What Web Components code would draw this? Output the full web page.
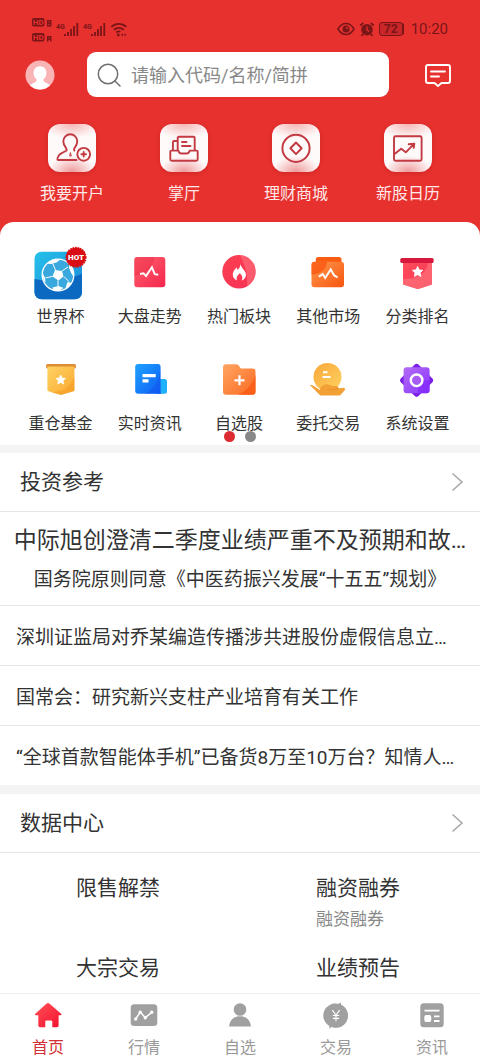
<!DOCTYPE html>
<html lang="zh-CN">
<head>
<meta charset="utf-8">
<meta name="viewport" content="width=device-width, initial-scale=1">
<title>首页</title>
<style>
  body {
    margin: 0;
    font-family: Roboto, "Noto Sans CJK SC", sans-serif;
    color: #333;
    background-color: #fff;
  }
</style>
</head>
<body>
<home-page>
  <status-bar></status-bar>
  <search-header placeholder="请输入代码/名称/简拼"></search-header>
  <quick-nav>
    <quick-link icon="account">我要开户</quick-link>
    <quick-link icon="hall">掌厅</quick-link>
    <quick-link icon="coin">理财商城</quick-link>
    <quick-link icon="calendar">新股日历</quick-link>
  </quick-nav>
  <feature-panel>
    <feature-link icon="worldcup">世界杯</feature-link>
    <feature-link icon="trend">大盘走势</feature-link>
    <feature-link icon="hot">热门板块</feature-link>
    <feature-link icon="market">其他市场</feature-link>
    <feature-link icon="rank">分类排名</feature-link>
    <feature-link icon="fund">重仓基金</feature-link>
    <feature-link icon="info">实时资讯</feature-link>
    <feature-link icon="folder">自选股</feature-link>
    <feature-link icon="entrust">委托交易</feature-link>
    <feature-link icon="setting">系统设置</feature-link>
  </feature-panel>
  <section-card heading="投资参考">
    <news-lead>
      <span slot="title">中际旭创澄清二季度业绩严重不及预期和故…</span>
      <span slot="sub">国务院原则同意《中医药振兴发展“十五五”规划》</span>
    </news-lead>
    <news-item>深圳证监局对乔某编造传播涉共进股份虚假信息立…</news-item>
    <news-item>国常会：研究新兴支柱产业培育有关工作</news-item>
    <news-item>“全球首款智能体手机”已备货8万至10万台？知情人…</news-item>
  </section-card>
  <section-card heading="数据中心">
    <data-grid>
      <data-item>限售解禁</data-item>
      <data-item sub="融资融券">融资融券</data-item>
      <data-item>大宗交易</data-item>
      <data-item>业绩预告</data-item>
    </data-grid>
  </section-card>
  <tab-bar slot="footer">
    <tab-item icon="tab-home" active>首页</tab-item>
    <tab-item icon="tab-quote">行情</tab-item>
    <tab-item icon="tab-self">自选</tab-item>
    <tab-item icon="tab-trade">交易</tab-item>
    <tab-item icon="tab-news">资讯</tab-item>
  </tab-bar>
</home-page>

<script>
const star = (x, y, s) =>
  `<path transform="translate(${x} ${y}) scale(${s})" d="M0-1 .29-.38 .95-.31 .46.15 .59.81 0 .48-.59.81-.46.15-.95-.31-.29-.38Z" fill="#fff" stroke="#fff" stroke-width=".15" stroke-linejoin="round"/>`;

const gradient = (id, from, to) =>
  `<linearGradient id="${id}" x1="0" y1="0" x2="1" y2="1"><stop offset="0" stop-color="${from}"/><stop offset="1" stop-color="${to}"/></linearGradient>`;

// each entry: [width, height, svg content]
const icons = {
  // header
  avatar: [30, 30, `
    <clipPath id="c"><circle cx="15" cy="15" r="14.5"/></clipPath>
    <circle cx="15" cy="15" r="14.5" fill="#f9b4b6"/>
    <path clip-path="url(#c)" fill="#fff" d="M15 6.3c-4 0-6.4 2.8-6.4 6.6 0 2.8 1.3 5 3 6.4.3 2-.8 2.7-3 3.7C6.3 24 5.4 25 5 26v4h20v-4c-.4-1-1.3-2-3.6-3-2.2-1-3.3-1.7-3-3.7 1.7-1.4 3-3.6 3-6.4 0-3.8-2.4-6.6-6.4-6.6Z"/>`],
  search: [24, 24, `
    <g fill="none" stroke="#707070" stroke-width="1.5" stroke-linecap="round"><circle cx="11" cy="11" r="9.7"/><path d="m18 18 5 5"/></g>`],
  message: [28, 24, `
    <g fill="none" stroke="#fff" stroke-width="1.9" stroke-linecap="round" stroke-linejoin="round">
      <path d="M4 2h20a2 2 0 0 1 2 2v14a2 2 0 0 1-2 2h-6.5L14 23l-3.500-3H4a2 2 0 0 1-2-2V4a2 2 0 0 1 2-2Z"/>
      <path d="M7 8.500h14M7 13.500h8"/>
    </g>`],

  // quick links
  account: [48, 48, `
    <g fill="none" stroke="#c23a42" stroke-width="1.9" stroke-linecap="round" stroke-linejoin="round">
      <path d="M28.5 36h-18c-1 0-1.3-.8-1-1.8.6-3.6 4-5.2 8.3-7.2 1-.6 1-1.6.4-2.6-1.7-2.3-2.9-4.3-2.9-7.1a7 7 0 0 1 14 0c0 2.8-1.2 4.8-2.9 7.1-.6.9-.5 1.6 0 2.2"/>
      <circle cx="35.7" cy="30.3" r="6.4"/>
      <path d="M35.7 28v4.600M33.4 30.300H38"/>
      <path d="m22.3 29-.6 3h1.200Z" stroke-width="1"/>
    </g>`],
  hall: [48, 48, `
    <g fill="none" stroke="#c23a42" stroke-width="1.9" stroke-linecap="round" stroke-linejoin="round">
      <path d="M17.7 26V14a1.200 1.200 0 0 1 1.200-1.200h14.600a1.200 1.200 0 0 1 1.200 1.200v12M17.700 17h-3.500a1.300 1.300 0 0 0-1.300 1.300V26"/>
      <path d="M11.3 26.600h7c.5 2 1.400 2.900 3 2.900h5.400c1.600 0 2.500-.9 3-2.900h7a1 1 0 0 1 1 1v7.700a1.500 1.500 0 0 1-1.500 1.500H11.800a1.500 1.500 0 0 1-1.500-1.500v-7.700a1 1 0 0 1 1-1Z"/>
      <path d="M22 18h4.500M22 22h8.500"/>
    </g>`],
  coin: [48, 48, `
    <g fill="none" stroke="#c23a42" stroke-width="2" stroke-linejoin="round">
      <circle cx="24" cy="24.3" r="13.6"/>
      <path d="m24 18.500 5.600 5.800-5.600 5.800-5.600-5.800Z"/>
    </g>`],
  calendar: [48, 48, `
    <g fill="none" stroke="#c23a42" stroke-width="1.9" stroke-linecap="round" stroke-linejoin="round">
      <rect x="10" y="12.300" width="27.600" height="24.500" rx="1.500"/>
      <path d="m10.500 30 6.700-5.300 4.600 3.600 7.700-8M24.700 20.300l5.600-.5-.6 4"/>
    </g>`],

  // feature grid
  worldcup: [56, 56, `
    <defs>${gradient("g", "#25c1ea", "#1b86d8")}</defs>
    <rect x="1.5" y="7.7" width="47.5" height="47.6" rx="7" fill="url(#g)"/>
    <path d="M1.5 35c15 3 34 0 47.500-5v18.300a7 7 0 0 1-7 7H8.500a7 7 0 0 1-7-7Z" fill="#0c69c2"/>
    <circle cx="25" cy="31" r="15.800" fill="#39a8de" stroke="#fff" stroke-width="1.300"/>
    <g fill="#fff">
      <path d="m22 26 7 1 1.500 5.500-5 4-6-4Z"/>
      <path d="M14 19.500 20.500 15l6.500.8-3.500 2.700-6 1.500ZM37 20l3.500 8-.6 4-2-3.500-2-5ZM9.500 29l2.500 4.500.5 5-2-2.500ZM20 46.500l-.5-3 6-1.500 5 2-4.500 3ZM34.500 38l4 1-3.500 4.500-2.500.5Z"/>
    </g>
    <path d="m22.500 26-3-7M29 27l6-4M31 32.600l5 5M25 36.400v6M19.500 32.400l-7 1.500" stroke="#fff" stroke-width="1"/>
    <circle cx="43" cy="13.300" r="9.800" fill="#d80c12" stroke="#d80c12" stroke-width="1.500" stroke-dasharray="1.500 1"/>
    <text x="43" y="16.300" text-anchor="middle" font-family="Roboto, sans-serif" font-weight="900" font-size="8" fill="#fff">HOT</text>`],
  trend: [56, 56, `
    <defs>${gradient("g", "#ff6470", "#f4254c")}</defs>
    <rect x="12.3" y="13" width="31" height="30.3" rx="3" fill="url(#g)"/>
    <path d="M15.3 13h17c-1 11-8 17-20 19V16a3 3 0 0 1 3-3Z" fill="#e9203f" opacity=".35"/>
    <path d="m18 30 3.400-.7 2.700 2.700 5.800-8.700 2.900 6.900 3.500.6" fill="none" stroke="#fff" stroke-width="1.900"/>`],
  hot: [56, 56, `
    <defs>${gradient("g", "#fb4152", "#f82f55")}</defs>
    <circle cx="28" cy="27.700" r="16.700" fill="url(#g)"/>
    <path d="M29 11.100A16.700 16.700 0 0 1 36 42.300C37 29 33 19 29 11.100Z" fill="#ff8a8f" opacity=".45"/>
    <path d="M28.500 18.500c1.500 3.500.3 5-1.700 7.300-.8-.8-1-1.500-1-2.500-2.800 2.700-4 5-4 7.300 0 3 1.700 5 4.300 6-1.300-3 .2-5 2.800-7.300 2.300 2.300 3.200 4.500 1.800 7.300 3-1.300 4.500-3.500 4.200-6.400-.2-3.200-4.600-6-6.400-11.700Z" fill="#fff"/>`],
  market: [56, 56, `
    <defs>${gradient("g", "#ff9a4e", "#f8540f")}</defs>
    <rect x="15.800" y="13" width="25.700" height="10" rx="2.500" fill="#f95d12"/>
    <rect x="11.500" y="17.700" width="32.500" height="25.600" rx="3" fill="url(#g)"/>
    <path d="M14.500 17.700H27c0 7-6 12-15.500 13V20.700a3 3 0 0 1 3-3Z" fill="#f9500d" opacity=".7"/>
    <path d="m18.800 32.700 4-2.600 2.400 3.900 5.500-8.500 3.500 6 3.400 1.800" fill="none" stroke="#fff" stroke-width="2"/>`],
  rank: [56, 56, `
    <defs>${gradient("g", "#ff4e5b", "#f73353")}</defs>
    <path d="M14 17h29v23.500L30 44.700q-1.200.4-2.400 0L14 40.500Z" fill="url(#g)"/>
    <path d="M43 19v21.500L30 44.700q-1.200.4-2.400 0L14 40.500V35c13 0 23-4 25-16Z" fill="#ff7d81" opacity=".6"/>
    <rect x="11.300" y="14" width="33.300" height="5" rx="1.500" fill="#d7173b"/>
    ${star(28.6, 28, 5.5)}`],
  fund: [56, 56, `
    <defs>${gradient("g", "#ffd263", "#f9a92f")}</defs>
    <rect x="13" y="13" width="30" height="4.500" rx="1.500" fill="#dd8e36"/>
    <path d="M14.400 15.500h27V39q0 1-1 1.300l-11 3.200q-1.500.4-3 0l-11-3.200q-1-.3-1-1.300Z" fill="url(#g)"/>
    <path d="M41.400 26V39q0 1-1 1.300l-11 3.200q-1.500.4-3 0l-8-2.300c13-1 18-5 23-15.200Z" fill="#f79d27" opacity=".6"/>
    ${star(27.7, 29, 5)}`],
  info: [56, 56, `
    <defs>${gradient("g", "#1fa2ff", "#0c5df5")}</defs>
    <rect x="33" y="28" width="12" height="14.700" rx="2.500" fill="#1eb0fb"/>
    <path d="M16.200 13H36a2.500 2.500 0 0 1 2.500 2.500v24.700a2.500 2.500 0 0 0 1 2.500H16.200a3 3 0 0 1-3-3V16a3 3 0 0 1 3-3Z" fill="url(#g)"/>
    <path d="M38.500 15v27.700H23c10-5 15-14 15.500-27.700Z" fill="#1455ee" opacity=".5"/>
    <path d="M20.500 24.600h13.200M20.500 29.800h6" stroke="#fff" stroke-width="3.200"/>`],
  folder: [56, 56, `
    <defs>${gradient("g", "#ffa562", "#fb6a22")}</defs>
    <path d="M15 13.300h10.500q1.200 0 2 1l2.300 3.200H41.500a3 3 0 0 1 3 3v20.200a3 3 0 0 1-3 3H15a3 3 0 0 1-3-3V16.300a3 3 0 0 1 3-3Z" fill="url(#g)"/>
    <path d="M44.500 24v16.700a3 3 0 0 1-3 3H27C36 40 42 33 44.500 24Z" fill="#fb5a14" opacity=".8"/>
    <path d="M28.500 24.300v10M23.500 29.300h10" stroke="#fff" stroke-width="2.200"/>`],
  entrust: [56, 56, `
    <defs>${gradient("g", "#f9a73a", "#ffd361")}</defs>
    <circle cx="27.500" cy="26" r="14" fill="url(#g)"/>
    <path d="M9.800 34q2.200-.5 4 1l6 4c.5-3.500 3.500-5.700 7-5.700 2 0 3.500 1 5.500 1.800h4.500q1.800.5 1.700 2.200l5.200-.6q2 .4 1 2.600L40.500 44q-.7.500-1.500.5H21.500q-1 0-1.700-.6Z" fill="#f3a136"/>
    <path d="M27 38.500c4.500.7 8 .5 11.300-1.300" fill="none" stroke="#e9912a" stroke-width="1"/>
    <path d="M23 21.300h4.500M22.500 26h8" stroke="#fff" stroke-width="2"/>`],
  setting: [56, 56, `
    <defs>${gradient("g", "#b26bf5", "#8a35fb")}</defs>
    <rect x="-12.500" y="-12.500" width="25" height="25" rx="3" transform="translate(27.600 29.300) rotate(45)" fill="#7a1fe6"/>
    <rect x="14.600" y="16.300" width="26" height="26" rx="3" fill="url(#g)"/>
    <path d="M40.600 29.300v10a3 3 0 0 1-3 3H29C29 36 30 33 27.600 29.300Z" fill="#8126ff" opacity=".6"/>
    <circle cx="27.600" cy="29.300" r="5.800" fill="#a75cf3" stroke="#fff" stroke-width="2.400"/>`],

  // tab bar
  "tab-home": [28, 28, `
    <defs>${gradient("g", "#ff5156", "#f5102f")}</defs>
    <path d="M12.700 2.500q1.300-1 2.600 0l11.800 10.200q1 1.200-.5 1.600h-2v10.300q0 1.700-1.700 1.700h-4.600v-5.500q0-1.300-1.300-1.300h-4.500q-1.200 0-1.200 1.300v5.500H6q-1.700 0-1.700-1.700V14.300H1.800q-1.500-.4-.5-1.600Z" fill="url(#g)"/>`],
  "tab-quote": [28, 28, `
    <rect x=".7" y="3.300" width="26.600" height="21.700" rx="3.500" fill="#a0a0a0"/>
    <path d="m5.700 18 4.600-7 5 5.700 6.300-5.200" fill="none" stroke="#fff" stroke-width="1.500"/>
    <g fill="#fff"><circle cx="5.700" cy="18" r="1.700"/><circle cx="10.300" cy="11.200" r="1.700"/><circle cx="15.300" cy="16.700" r="1.700"/><circle cx="21.700" cy="11.300" r="1.700"/></g>`],
  "tab-self": [28, 28, `
    <g fill="#a0a0a0"><circle cx="14" cy="8.500" r="6.300"/><path d="M3 25.500c.8-6.500 4.500-10.300 11-10.300s10.200 3.800 11 10.300Z"/></g>`],
  "tab-trade": [28, 28, `
    <path d="M19 1.500v2.300A12 12 0 0 1 9.500 25.800L7.300 28v-3A12 12 0 0 1 16 2.900Z" fill="#a0a0a0"/>
    <circle cx="14" cy="14.700" r="12" fill="#a0a0a0"/>
    <path d="m10.300 9 3.700 5.300L17.700 9M14 14.300v6M10.800 14.500h6.400M10.800 17.400h6.400" fill="none" stroke="#fff" stroke-width="1.200"/>`],
  "tab-news": [28, 28, `
    <rect x="2.300" y="2.300" width="23.400" height="24" rx="3.500" fill="#a0a0a0"/>
    <path d="M6.500 9.700h15M16 15.300h5.500M16 20h5.500" stroke="#fff" stroke-width="1.800"/>
    <rect x="6.300" y="14" width="7" height="7" rx="2" fill="#fff"/>`],

  // status bar
  hd: [22, 26, `
    <g fill="#7a1518"><rect x="1" y="2" width="12.500" height="8.500" rx="2"/><rect x="1" y="17" width="12.500" height="8.500" rx="2"/></g>
    <g font-family="Roboto, sans-serif" font-weight="700" font-size="8" fill="#e7312f" text-anchor="middle"><text x="7.300" y="9.200">HD</text><text x="7.300" y="24.200">HD</text></g>
    <g fill="none" stroke="#7a1518" stroke-width="1.500"><path d="M16.700 4.700h3v5h-3ZM16.700 7.200h3M16.700 25.500v-4.800h3v4.800M16.700 23h3"/></g>`],
  signal: [24, 18, `
    <text x="0" y="8.500" font-family="Roboto, sans-serif" font-weight="700" font-size="7" fill="#7a1518">4G</text>
    <path d="M9 16v-2M12 16v-4M15 16V9M18 16V6M21.300 16V3" stroke="#7a1518" stroke-width="1.800"/>`],
  wifi: [18, 16, `
    <g fill="none" stroke="#7a1518" stroke-width="1.800"><path d="M1.300 5.800a11 11 0 0 1 15 0M3.800 8.800a7.500 7.500 0 0 1 10 0M6.300 11.500a4 4 0 0 1 4-.8"/></g>
    <circle cx="8.300" cy="14" r="1.400" fill="#7a1518"/>
    <path d="m11 13.700 2-1.500v3ZM16.500 13.700l-2-1.500v3Z" fill="#7a1518"/>`],
  eye: [18, 14, `
    <path d="M1 7c4.300-7.300 11.700-7.300 16 0-4.300 7.300-11.700 7.300-16 0Z" fill="none" stroke="#7a1518" stroke-width="1.500"/>
    <circle cx="9" cy="7" r="3.500" fill="#7a1518"/><circle cx="10" cy="6" r="1" fill="#e7312f"/>`],
  alarm: [16, 16, `
    <circle cx="8" cy="8.700" r="5.800" fill="#7a1518"/>
    <path d="M1.300 4.500 4.300 1.800M14.700 4.500l-3-2.700M4 13l-1.500 2M12 13l1.500 2" stroke="#7a1518" stroke-width="1.700"/>
    <path d="M8 5.500V9l2.300 1.500" fill="none" stroke="#e7312f" stroke-width="1.300"/>`],
};

const render = (element, html) => {
  const template = document.createElement("template");
  template.innerHTML = html;
  element.attachShadow({ mode: "open" }).appendChild(template.content.cloneNode(true));
};

customElements.define(
  "app-icon",
  class AppIcon extends HTMLElement {
    constructor() {
      super();
      this.attachShadow({ mode: "open" });
    }

    connectedCallback() {
      const [width, height, content] = icons[this.getAttribute("name")];
      this.shadowRoot.innerHTML = `
        <style>
          :host { display: block; flex: none; }
          svg { display: block; }
        </style>
        <svg width="${width}" height="${height}" viewBox="0 0 ${width} ${height}" aria-hidden="true">${content}</svg>
      `;
    }
  }
);

customElements.define(
  "home-page",
  class HomePage extends HTMLElement {
    constructor() {
      super();
      render(this, `
        <style>
          :host { display: flex; flex-direction: column; height: 100vh; }
          main { flex: 1; min-height: 0; overflow-y: auto; scrollbar-width: none; }
        </style>
        <main><slot></slot></main>
        <slot name="footer"></slot>
      `);
    }
  }
);

customElements.define(
  "status-bar",
  class StatusBar extends HTMLElement {
    constructor() {
      super();
      render(this, `
        <style>
          :host {
            display: flex;
            justify-content: space-between;
            align-items: center;
            height: 52px;
            padding: 6px 32px 0 31px;
            box-sizing: border-box;
            background-color: #e7312f;
            color: #7a1518;
          }
          div { display: flex; align-items: center; gap: 3px; }
          .right { gap: 4px; }
          .battery {
            width: 22px;
            border: 1px solid #7a1518;
            border-radius: 3px;
            background-color: #c92629;
            font-size: 12px;
            font-weight: 700;
            line-height: 12px;
            text-align: center;
            box-shadow: 2px 0 0 -1px #7a1518;
          }
          time { margin-left: 4px; font-size: 15px; line-height: 20px; }
        </style>
        <div>
          <app-icon name="hd"></app-icon>
          <app-icon name="signal"></app-icon>
          <app-icon name="signal"></app-icon>
          <app-icon name="wifi"></app-icon>
        </div>
        <div class="right">
          <app-icon name="eye"></app-icon>
          <app-icon name="alarm"></app-icon>
          <span class="battery">72</span>
          <time>10:20</time>
        </div>
      `);
    }
  }
);

customElements.define(
  "search-header",
  class SearchHeader extends HTMLElement {
    constructor() {
      super();
      render(this, `
        <style>
          :host {
            display: flex;
            align-items: center;
            padding: 0 28px 0 25px;
            background-color: #e7312f;
          }
          button { flex: none; padding: 0; border: 0; background: none; cursor: pointer; }
          label {
            display: flex;
            flex: 1;
            min-width: 0;
            align-items: center;
            gap: 10px;
            height: 45px;
            margin: 0 35px 0 32px;
            padding: 1px 10px 0;
            box-sizing: border-box;
            border-radius: 9px;
            background-color: #fff;
          }
          input {
            flex: 1;
            min-width: 0;
            padding: 2px 0 0;
            border: 0;
            outline: 0;
            background: none;
            color: #333;
            font: inherit;
            font-size: 18px;
            line-height: 26px;
          }
          input::placeholder { color: #888; opacity: 1; }
        </style>
        <button type="button" aria-label="我的"><app-icon name="avatar"></app-icon></button>
        <label>
          <app-icon name="search"></app-icon>
          <input type="search" aria-label="搜索">
        </label>
        <button type="button" aria-label="消息"><app-icon name="message"></app-icon></button>
      `);
    }

    connectedCallback() {
      this.shadowRoot.querySelector("input").placeholder = this.getAttribute("placeholder");
    }
  }
);

customElements.define(
  "quick-nav",
  class QuickNav extends HTMLElement {
    constructor() {
      super();
      render(this, `
        <style>
          :host { display: block; background-color: #e7312f; }
          nav {
            display: grid;
            grid-template-columns: repeat(4, 1fr);
            padding: 27px 16px 16px;
          }
        </style>
        <nav><slot></slot></nav>
      `);
    }
  }
);

customElements.define(
  "quick-link",
  class QuickLink extends HTMLElement {
    constructor() {
      super();
      render(this, `
        <style>
          :host { display: block; }
          a {
            display: flex;
            flex-direction: column;
            align-items: center;
            gap: 10px;
            color: #ffe9e8;
            font-size: 16px;
            line-height: 24px;
            text-decoration: none;
          }
          app-icon {
            border-radius: 12px;
            background:
              radial-gradient(ellipse 50% 34% at 50% 100%, #ee9a9a, transparent),
              radial-gradient(ellipse 60% 30% at 50% 0, #f4b5b5, transparent),
              #fffafa;
            box-shadow: 0 1px 4px rgba(150, 10, 10, 0.3);
          }
        </style>
        <a href="#"><app-icon name="${this.getAttribute("icon")}"></app-icon><slot></slot></a>
      `);
    }
  }
);

customElements.define(
  "feature-panel",
  class FeaturePanel extends HTMLElement {
    constructor() {
      super();
      render(this, `
        <style>
          :host { display: block; position: relative; background-color: #e7312f; }
          nav {
            display: grid;
            grid-template-columns: repeat(5, 1fr);
            row-gap: 22px;
            padding: 22px 18px 9px 16px;
            border-radius: 14px 14px 0 0;
            background-color: #fff;
          }
          .pager {
            position: absolute;
            right: 0;
            bottom: 3px;
            left: 0;
            display: flex;
            justify-content: center;
            gap: 10px;
          }
          .pager i { width: 11px; height: 11px; border-radius: 50%; background-color: #888; }
          .pager i.on { background-color: #dc2c31; }
        </style>
        <nav><slot></slot></nav>
        <div class="pager"><i class="on"></i><i></i></div>
      `);
    }
  }
);

customElements.define(
  "feature-link",
  class FeatureLink extends HTMLElement {
    constructor() {
      super();
      render(this, `
        <style>
          :host { display: block; }
          a {
            display: flex;
            flex-direction: column;
            align-items: center;
            gap: 5px;
            color: #333;
            font-size: 16px;
            line-height: 24px;
            text-decoration: none;
            white-space: nowrap;
          }
        </style>
        <a href="#"><app-icon name="${this.getAttribute("icon")}"></app-icon><slot></slot></a>
      `);
    }
  }
);

customElements.define(
  "section-card",
  class SectionCard extends HTMLElement {
    constructor() {
      super();
      render(this, `
        <style>
          :host { display: block; border-top: 8px solid #f4f4f4; background-color: #fff; }
          h2 { margin: 0; border-bottom: 1px solid #e6e6e6; font-size: 21px; font-weight: 400; line-height: 58px; }
          a {
            display: flex;
            justify-content: space-between;
            align-items: center;
            padding: 0 16px 0 20px;
            color: #333;
            text-decoration: none;
          }
        </style>
        <h2>
          <a href="#">${this.getAttribute("heading")}
            <svg width="13" height="20" viewBox="0 0 13 20" fill="none" stroke="#a8a8a8" stroke-width="1.6" aria-hidden="true"><path d="m1.500 1.500 9.500 8.500-9.500 8.500"/></svg>
          </a>
        </h2>
        <slot></slot>
      `);
    }
  }
);

customElements.define(
  "news-lead",
  class NewsLead extends HTMLElement {
    constructor() {
      super();
      render(this, `
        <style>
          :host { display: block; border-bottom: 1px solid #e6e6e6; }
          a {
            display: flex;
            flex-direction: column;
            gap: 8px;
            padding: 13px 8px 11px;
            color: #333;
            text-align: center;
            text-decoration: none;
            white-space: nowrap;
          }
          .title { font-size: 23px; line-height: 32px; }
          .sub { font-size: 19px; line-height: 29px; }
        </style>
        <a href="#">
          <div class="title"><slot name="title"></slot></div>
          <div class="sub"><slot name="sub"></slot></div>
        </a>
      `);
    }
  }
);

customElements.define(
  "news-item",
  class NewsItem extends HTMLElement {
    constructor() {
      super();
      render(this, `
        <style>
          :host { display: block; border-bottom: 1px solid #e6e6e6; }
          :host(:last-of-type) { border-bottom-color: #f4f4f4; }
          a {
            display: block;
            overflow: hidden;
            padding: 4px 16px 0;
            color: #333;
            font-size: 19px;
            line-height: 55px;
            text-decoration: none;
            text-overflow: ellipsis;
            white-space: nowrap;
          }
        </style>
        <a href="#"><slot></slot></a>
      `);
    }
  }
);

customElements.define(
  "data-grid",
  class DataGrid extends HTMLElement {
    constructor() {
      super();
      render(this, `
        <style>
          :host { display: grid; grid-template-columns: 1fr 1fr; grid-auto-rows: 80px; }
        </style>
        <slot></slot>
      `);
    }
  }
);

customElements.define(
  "data-item",
  class DataItem extends HTMLElement {
    constructor() {
      super();
      render(this, `
        <style>
          :host { display: block; padding: 21px 0 0 76px; }
          a { display: block; color: #333; font-size: 21px; line-height: 28px; text-decoration: none; }
          small { display: block; margin-top: 5px; color: #888; font-size: 17px; line-height: 24px; }
        </style>
        <a href="#"><slot></slot>${this.hasAttribute("sub") ? `<small>${this.getAttribute("sub")}</small>` : ""}</a>
      `);
    }
  }
);

customElements.define(
  "tab-bar",
  class TabBar extends HTMLElement {
    constructor() {
      super();
      render(this, `
        <style>
          :host { display: block; flex: none; border-top: 1px solid #f0f0f0; background-color: #fff; }
          nav { display: grid; grid-template-columns: repeat(5, 1fr); padding: 7px 0 1px; }
        </style>
        <nav><slot></slot></nav>
      `);
    }
  }
);

customElements.define(
  "tab-item",
  class TabItem extends HTMLElement {
    constructor() {
      super();
      render(this, `
        <style>
          :host { display: block; color: #999; }
          :host([active]) { color: #d32f36; }
          a {
            display: flex;
            flex-direction: column;
            align-items: center;
            gap: 7px;
            color: inherit;
            font-size: 16px;
            line-height: 24px;
            text-decoration: none;
          }
        </style>
        <a href="#"><app-icon name="${this.getAttribute("icon")}"></app-icon><slot></slot></a>
      `);
    }
  }
);
</script>
</body>
</html>
